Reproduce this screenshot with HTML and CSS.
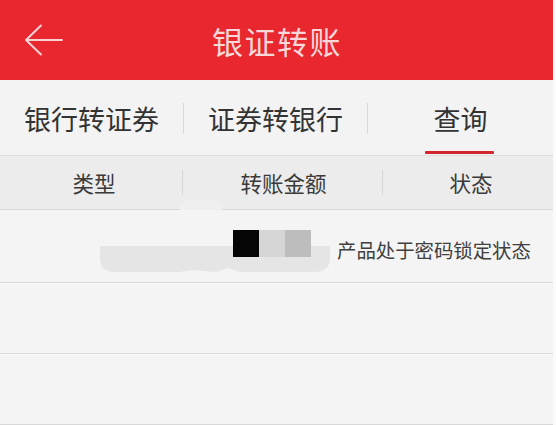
FILE: index.html
```html
<!DOCTYPE html>
<html lang="zh-CN">
<head>
<meta charset="utf-8">
<title>银证转账</title>
<link rel="stylesheet" href="styles.css">
</head>
<body>
<div class="app">
  <header class="topbar">
    <div class="back">
      <svg width="40" height="36" viewBox="0 0 40 36" aria-hidden="true">
        <path d="M2 17 H38 M2 17 L17 2.5 M2 17 L17 31.5" fill="none" stroke="#f6d3d5" stroke-width="2" stroke-linecap="round" stroke-linejoin="round"/>
      </svg>
    </div>
    <h1 class="title">银证转账</h1>
    <div class="spacer"></div>
  </header>

  <nav class="tabs">
    <div class="tab">银行转证券</div>
    <span class="tab-sep"></span>
    <div class="tab">证券转银行</div>
    <span class="tab-sep"></span>
    <div class="tab active">查询</div>
  </nav>

  <div class="cols">
    <div class="col c1">类型</div>
    <span class="col-sep"></span>
    <div class="col c2">转账金额</div>
    <span class="col-sep"></span>
    <div class="col c3">状态</div>
  </div>

  <div class="rows">
    <div class="watermark">
      <svg width="240" height="80" viewBox="0 0 240 80" aria-hidden="true">
        <path d="M80 6 Q82 0 100 0 Q120 0 122 6 L122 10 L80 10 Z" fill="#efefef"/>
        <path d="M0 46 L230 46 L230 58 Q230 72 214 72 L140 72 L128 68 L116 72 L92 70 L80 72 L16 72 Q0 72 0 58 Z" fill="#e5e5e5"/>
      </svg>
    </div>
    <div class="row first">
      <div class="mask">
        <span class="blk b1"></span><span class="blk b2"></span><span class="blk b3"></span>
      </div>
      <span class="status">产品处于密码锁定状态</span>
    </div>
    <div class="row"></div>
    <div class="row"></div>
  </div>
</div>
</body>
</html>
```

FILE: styles.css
```css
html, body {
  margin: 0;
  padding: 0;
}
body {
  background: #fafafa;
  font-family: "Noto Sans CJK SC", "Noto Sans", sans-serif;
  color: #383838;
}
.app {
  width: 553px;
  height: 425px;
  background: #f4f4f4;
  overflow: hidden;
}
.topbar {
  height: 80px;
  background: #e8272f;
  display: grid;
  grid-template-columns: 1fr auto 1fr;
  align-items: center;
}
.back {
  padding-left: 24px;
  padding-top: 2px;
  display: flex;
  align-items: center;
}
.title {
  margin: 0;
  font-size: 31px;
  font-weight: 400;
  letter-spacing: 1.5px;
  color: #f7d7d9;
  line-height: 1;
  padding-left: 1px;
}
.tabs {
  height: 75px;
  display: flex;
  align-items: center;
  background: #f3f3f3;
  border-bottom: 1px solid #dedede;
}
.tab {
  width: 183px;
  height: 75px;
  display: flex;
  align-items: center;
  justify-content: center;
  font-size: 27px;
  color: #333;
  position: relative;
  padding-top: 2px;
  box-sizing: border-box;
}
.tab.active {
  width: 185px;
}
.tab.active::after {
  content: "";
  position: absolute;
  left: 57px;
  bottom: 1px;
  width: 69px;
  height: 3px;
  background: #d1262e;
  border-radius: 1px;
}
.tab-sep {
  width: 1px;
  height: 31px;
  margin-top: 2px;
  background: #d8d8d8;
  flex: none;
}
.cols {
  height: 53px;
  display: flex;
  align-items: center;
  background: #ececec;
  border-bottom: 1px solid #dadada;
}
.col {
  font-size: 21.5px;
  color: #3a3a3a;
  text-align: center;
  box-sizing: border-box;
}
.c1 { width: 182px; padding-left: 6px; }
.c2 { width: 199px; padding-left: 2px; }
.c3 { flex: 1; padding-left: 6px; }
.col-sep {
  width: 1px;
  height: 25px;
  background: #d6d6d6;
  flex: none;
}
.rows {
  position: relative;
}
.watermark {
  position: absolute;
  left: 100px;
  top: -10px;
}
.row {
  position: relative;
  height: 70px;
  border-bottom: 1px solid #d8d8d8;
  box-shadow: 0 1px 0 #fbfbfb;
  display: flex;
  align-items: center;
}
.row.first {
  height: 72px;
}
.mask {
  display: flex;
  margin-left: 233px;
  margin-bottom: 5px;
}
.blk {
  width: 26px;
  height: 27px;
  display: block;
}
.b1 { background: #050505; }
.b2 { background: #d6d6d6; }
.b3 { background: #bdbdbd; }
.status {
  margin-left: 26px;
  margin-top: 7px;
  font-size: 19.4px;
  color: #404040;
}
```
